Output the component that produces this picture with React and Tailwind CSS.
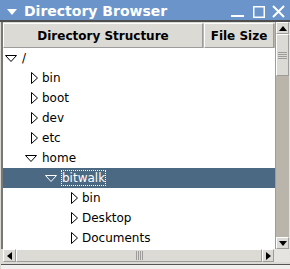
import React from "react";

const rows = [
  { name: "/", level: 0, open: true },
  { name: "bin", level: 1 },
  { name: "boot", level: 1 },
  { name: "dev", level: 1 },
  { name: "etc", level: 1 },
  { name: "home", level: 1, open: true },
  { name: "bitwalk", level: 2, open: true, selected: true },
  { name: "bin", level: 3 },
  { name: "Desktop", level: 3 },
  { name: "Documents", level: 3 },
];

const Expander = ({ open, light }) => {
  const stroke = light ? "#ffffff" : "#000000";
  const fill = light ? "#4b6983" : "#ffffff";
  return open ? (
    <svg width="12" height="8" viewBox="0 0 12 8" className="ml-[2px] mt-[2px]">
      <polygon points="0.5,0.5 11.5,0.5 6,6.5" fill={fill} stroke={stroke} />
    </svg>
  ) : (
    <svg width="7" height="12" viewBox="0 0 7 12" className="ml-[8px]">
      <polygon points="0.5,0.5 0.5,11.5 6.5,6" fill={fill} stroke={stroke} />
    </svg>
  );
};

const TreeRow = ({ row }) => (
  <div
    className={`h-[20px] flex items-center text-[12px] ${
      row.selected ? "bg-[#4b6983] text-white" : "text-black"
    }`}
  >
    <div style={{ width: row.level * 20 }} className="shrink-0" />
    <div className="w-[19px] h-[20px] shrink-0 flex items-center">
      <Expander open={row.open} light={row.selected} />
    </div>
    <span
      className={`leading-[16px] ${
        row.selected ? "outline outline-1 outline-dotted outline-white -outline-offset-1 px-[1px] -ml-[1px]" : ""
      }`}
    >
      {row.name}
    </span>
  </div>
);

export default function App() {
  return (
    <div
      className="w-[290px] h-[269px] bg-[#dcdad5] flex flex-col overflow-hidden"
      style={{ fontFamily: "'DejaVu Sans', sans-serif" }}
    >
      {/* Title bar */}
      <div className="h-[20px] bg-[#6b95ca] flex items-center text-white shrink-0">
        <svg width="24" height="20" viewBox="0 0 24 20" className="shrink-0">
          <polygon points="7,9 17,9 12,15" fill="#ffffff" />
        </svg>
        <span className="font-bold text-[14px] leading-[20px] pt-[1px]">Directory Browser</span>
        <div className="flex-1" />
        <svg width="56" height="20" viewBox="0 0 56 20" className="shrink-0 mr-[4px]">
          <rect x="1" y="15" width="13" height="2" fill="#ffffff" />
          <rect x="23.75" y="6.75" width="10.5" height="10.5" fill="none" stroke="#ffffff" strokeWidth="1.5" />
          <path d="M43 6 L54 17 M54 6 L43 17" stroke="#ffffff" strokeWidth="2" />
        </svg>
      </div>
      <div className="h-[2px] bg-[#4e4e4e] shrink-0" />

      {/* Body */}
      <div className="flex flex-1 min-h-0 pl-[1px]">
        <div className="flex flex-col flex-1 min-w-0">
          <div className="flex flex-1 min-h-0">
            <div className="flex flex-col flex-1 min-w-0 border-l-2 border-[#7a7874]">
              {/* Header */}
              <div className="flex h-[26px] shrink-0 pt-[1px] pr-[1px]">
                <div className="w-[200px] flex items-center justify-center font-bold text-[12px] border-t border-l border-white border-r border-b border-r-[#9d9c9b] border-b-[#9d9c9b] shadow-[1px_1px_0_#bab5ab]">
                  Directory Structure
                </div>
                <div className="flex-1 flex items-center justify-center font-bold text-[12px] border-t border-l border-white border-r border-b border-r-[#9d9c9b] border-b-[#9d9c9b] ml-[1px] shadow-[1px_1px_0_#bab5ab]">
                  File Size
                </div>
              </div>
              {/* Tree */}
              <div className="flex-1 bg-white overflow-hidden">
                {rows.map((r, i) => (
                  <TreeRow key={i} row={r} />
                ))}
              </div>
            </div>
            {/* Vertical scrollbar */}
            <div className="w-[14px] shrink-0 flex flex-col bg-[#bab5ab] border-l border-[#9d9c9b]">
              <div className="h-[12px] bg-[#dcdad5] border border-t-white border-l-white border-r-[#9d9c9b] border-b-[#9d9c9b] flex items-center justify-center">
                <svg width="8" height="5" viewBox="0 0 8 5">
                  <polygon points="0,5 8,5 4,0" fill="#000" />
                </svg>
              </div>
              <div className="h-[42px] bg-[#dcdad5] border border-t-white border-l-white border-r-[#9d9c9b] border-b-[#9d9c9b] flex flex-col items-center justify-center gap-[1px]">
                {[0, 1, 2, 3].map((i) => (
                  <div key={i} className="w-[9px] h-[1px] bg-[#9d9c9b]" />
                ))}
              </div>
              <div className="flex-1" />
              <div className="h-[12px] bg-[#dcdad5] border border-t-white border-l-white border-r-[#9d9c9b] border-b-[#9d9c9b] flex items-center justify-center">
                <svg width="8" height="5" viewBox="0 0 8 5">
                  <polygon points="0,0 8,0 4,5" fill="#000" />
                </svg>
              </div>
            </div>
            <div className="w-[1px] shrink-0 bg-[#e6e4e0]" />
          </div>
          {/* Horizontal scrollbar */}
          <div className="flex h-[13px] shrink-0">
            <div className="flex flex-1 bg-[#bab5ab] ml-[2px]">
              <div className="w-[13px] bg-[#dcdad5] border border-t-white border-l-white border-r-[#9d9c9b] border-b-[#9d9c9b] flex items-center justify-center">
                <svg width="5" height="8" viewBox="0 0 5 8">
                  <polygon points="5,0 5,8 0,4" fill="#000" />
                </svg>
              </div>
              <div className="flex-1 bg-[#dcdad5] border border-t-white border-l-white border-r-[#9d9c9b] border-b-[#9d9c9b] flex items-center justify-center gap-[1px]">
                {[0, 1, 2, 3].map((i) => (
                  <div key={i} className="h-[9px] w-[1px] bg-[#9d9c9b]" />
                ))}
              </div>
              <div className="w-[12px] bg-[#dcdad5] border border-t-white border-l-white border-r-[#9d9c9b] border-b-[#9d9c9b] flex items-center justify-center">
                <svg width="5" height="8" viewBox="0 0 5 8">
                  <polygon points="0,0 0,8 5,4" fill="#000" />
                </svg>
              </div>
            </div>
            <div className="w-[16px] shrink-0 bg-[#e6e4e0]" />
          </div>
          <div className="h-[7px] shrink-0 flex flex-col">
            <div className="h-[2px] bg-[#dcdad5]" />
            <div className="h-[1px] bg-[#555]" />
            <div className="h-[4px] bg-[#f0efed]" />
          </div>
        </div>
      </div>
    </div>
  );
}
